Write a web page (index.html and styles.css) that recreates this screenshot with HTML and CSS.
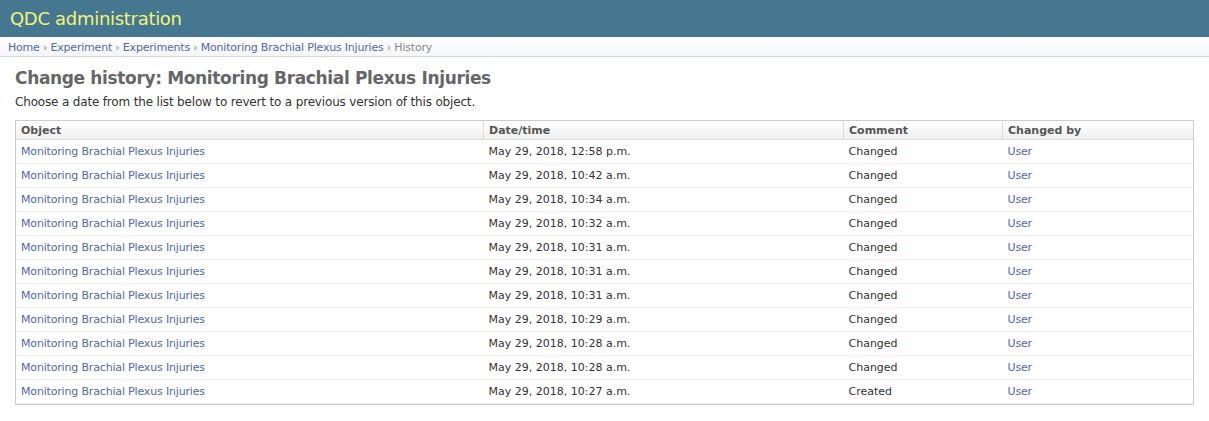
FILE: index.html
```html
<!DOCTYPE html>
<html lang="en">
<head>
<meta charset="utf-8">
<title>Change history | QDC administration</title>
<link rel="stylesheet" href="styles.css">
</head>
<body>
<div class="header">
  <h1 class="branding">QDC administration</h1>
</div>
<div class="breadcrumbs">
  <a href="#">Home</a> › <a href="#">Experiment</a> › <a href="#">Experiments</a> › <a href="#">Monitoring Brachial Plexus Injuries</a> › History
</div>
<div class="content">
  <h1 class="title">Change history: Monitoring Brachial Plexus Injuries</h1>
  <p class="help">Choose a date from the list below to revert to a previous version of this object.</p>
  <div class="module">
    <table class="history">
      <thead>
        <tr><th class="c-obj">Object</th><th class="c-date">Date/time</th><th class="c-comment">Comment</th><th class="c-user">Changed by</th></tr>
      </thead>
      <tbody>
        <tr><td><a href="#">Monitoring Brachial Plexus Injuries</a></td><td>May 29, 2018, 12:58 p.m.</td><td>Changed</td><td><a href="#">User</a></td></tr>
        <tr><td><a href="#">Monitoring Brachial Plexus Injuries</a></td><td>May 29, 2018, 10:42 a.m.</td><td>Changed</td><td><a href="#">User</a></td></tr>
        <tr><td><a href="#">Monitoring Brachial Plexus Injuries</a></td><td>May 29, 2018, 10:34 a.m.</td><td>Changed</td><td><a href="#">User</a></td></tr>
        <tr><td><a href="#">Monitoring Brachial Plexus Injuries</a></td><td>May 29, 2018, 10:32 a.m.</td><td>Changed</td><td><a href="#">User</a></td></tr>
        <tr><td><a href="#">Monitoring Brachial Plexus Injuries</a></td><td>May 29, 2018, 10:31 a.m.</td><td>Changed</td><td><a href="#">User</a></td></tr>
        <tr><td><a href="#">Monitoring Brachial Plexus Injuries</a></td><td>May 29, 2018, 10:31 a.m.</td><td>Changed</td><td><a href="#">User</a></td></tr>
        <tr><td><a href="#">Monitoring Brachial Plexus Injuries</a></td><td>May 29, 2018, 10:31 a.m.</td><td>Changed</td><td><a href="#">User</a></td></tr>
        <tr><td><a href="#">Monitoring Brachial Plexus Injuries</a></td><td>May 29, 2018, 10:29 a.m.</td><td>Changed</td><td><a href="#">User</a></td></tr>
        <tr><td><a href="#">Monitoring Brachial Plexus Injuries</a></td><td>May 29, 2018, 10:28 a.m.</td><td>Changed</td><td><a href="#">User</a></td></tr>
        <tr><td><a href="#">Monitoring Brachial Plexus Injuries</a></td><td>May 29, 2018, 10:28 a.m.</td><td>Changed</td><td><a href="#">User</a></td></tr>
        <tr><td><a href="#">Monitoring Brachial Plexus Injuries</a></td><td>May 29, 2018, 10:27 a.m.</td><td>Created</td><td><a href="#">User</a></td></tr>
      </tbody>
    </table>
  </div>
</div>
</body>
</html>
```
FILE: styles.css
```css
html, body {
  margin: 0;
  padding: 0;
}
body {
  font-family: "DejaVu Sans", Verdana, sans-serif;
  font-size: 12px;
  color: #333;
  background: #fff;
}
a {
  color: #5469a8;
  text-decoration: none;
}
.header {
  background: #457791;
  overflow: hidden;
}
.branding {
  margin: 8px 0;
  padding: 0 10px;
  font-size: 18px;
  line-height: 21px;
  font-weight: normal;
  letter-spacing: -0.3px;
  color: #f4f379;
}
.breadcrumbs {
  background: linear-gradient(#ffffff, #f3f5f7);
  padding: 3px 8px 2px 8px;
  font-size: 11px;
  line-height: 13px;
  letter-spacing: -0.2px;
  color: #888;
  border-top: 1px solid #fff;
  border-bottom: 1px solid #d6d6d6;
}
.content {
  margin: 10px 15px;
}
.title {
  margin: 0 0 4px;
  font-size: 17px;
  line-height: 22px;
  letter-spacing: -0.35px;
  color: #666;
  font-weight: bold;
}
.help {
  margin: 0 0 10px;
  padding-top: 1px;
  line-height: 16px;
  letter-spacing: -0.17px;
}
.module {
  border: 1px solid #ccc;
  background: #fff;
}
.history {
  width: 100%;
  border-collapse: collapse;
  table-layout: fixed;
}
.history th, .history td {
  text-align: left;
  font-size: 11px;
  padding: 5px;
  line-height: 13px;
  vertical-align: top;
  border-bottom: 1px solid #eee;
}
.history td a {
  letter-spacing: -0.17px;
}
.history thead th {
  padding: 3px 5px 2px;
  color: #555;
  font-weight: bold;
  background: linear-gradient(#ffffff, #f0f0f0);
  border-left: 1px solid #ddd;
  border-bottom: 1px solid #ddd;
}
.history thead th:first-child {
  border-left: 0;
}
.c-obj { width: 457px; }
.c-date { width: 349px; }
.c-comment { width: 148px; }
```
